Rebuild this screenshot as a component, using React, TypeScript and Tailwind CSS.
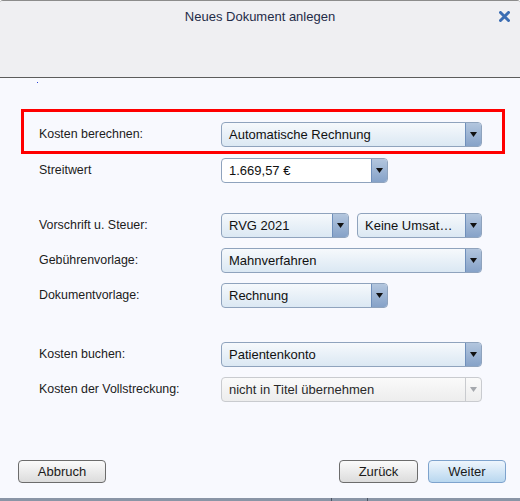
type Variant = "blue" | "white" | "disabled";

interface SelectProps {
  text: string;
  width: string;
  variant?: Variant;
}

function Select({ text, width, variant = "blue" }: SelectProps) {
  const disabled = variant === "disabled";
  return (
    <div
      className={`flex h-[25px] ${width} rounded-[4px] border ${
        disabled ? "border-[#c9cbcf]" : "border-[#8fa3bd]"
      } ${
        variant === "white"
          ? "bg-white"
          : disabled
            ? "bg-gradient-to-b from-[#fafafa] to-[#ededed]"
            : "bg-gradient-to-b from-[#f6f9fc] to-[#dbe8f3]"
      }`}
    >
      <span
        className={`flex-1 truncate pl-[7px] text-[13px] leading-[23px] ${
          disabled ? "text-[#2a2a2a]" : "text-[#111]"
        }`}
      >
        {text}
      </span>
      <span
        className={`flex w-[16px] items-center justify-center rounded-r-[3px] border-l ${
          disabled
            ? "border-[#c9cbcf] bg-transparent"
            : "border-[#6f8fbb] bg-gradient-to-b from-[#b3c6de] to-[#86a2c8]"
        }`}
      >
        <svg width="7" height="5" viewBox="0 0 7 5">
          <path d="M0 0h7L3.5 5z" fill={disabled ? "#a5a8ad" : "#111"} />
        </svg>
      </span>
    </div>
  );
}

function Row({
  label,
  children,
  className = "",
}: {
  label: string;
  children: React.ReactNode;
  className?: string;
}) {
  return (
    <div className={`flex items-center ${className}`}>
      <span className="w-[182px] text-[12.4px] text-[#1c1c1c]">{label}</span>
      {children}
    </div>
  );
}

function Button({ label, primary }: { label: string; primary?: boolean }) {
  return (
    <button
      className={`h-[23px] rounded-[4px] border text-[13px] text-[#1a1a1a] ${
        primary
          ? "w-[78px] border-[#7ea3cd] bg-gradient-to-b from-[#eef6fd] to-[#b9d7ef]"
          : "w-[79px] border-[#6c6c6c] bg-gradient-to-b from-[#fbfbfb] to-[#dcdcdc]"
      }`}
    >
      {label}
    </button>
  );
}

export default function App() {
  return (
    <div
      className="flex h-[501px] w-[520px] flex-col overflow-hidden rounded-t-[3px] border-t border-[#8c8c8c] bg-[#f8f9fe]"
      style={{ fontFamily: '"Liberation Sans", Arial, sans-serif' }}
    >
      <div className="relative h-[77px] border-b border-[#5c5c5c] bg-[#efeff2]">
        <p className="pt-[6px] text-center text-[13px] text-[#1f2c48]">
          Neues Dokument anlegen
        </p>
        <svg
          className="absolute right-[10px] top-[10px]"
          width="11"
          height="11"
          viewBox="0 0 11 11"
        >
          <path
            d="M1.5 1.5l8 8M9.5 1.5l-8 8"
            stroke="#3b6db3"
            strokeWidth="3"
            strokeLinecap="round"
          />
        </svg>
      </div>

      <div className="flex flex-1 flex-col">
        <div className="h-[31px] pl-[37px] pt-[4px]">
          <div className="h-[1px] w-[1px] bg-[#2b3fd6]" />
        </div>

        <div className="ml-[21px] h-[45px] w-[484px] border-[3px] border-[#f00] pl-[15px] pt-[10px]">
          <Row label="Kosten berechnen:">
            <Select text="Automatische Rechnung" width="w-[261px]" />
          </Row>
        </div>

        <div className="flex flex-col pl-[39px]">
          <Row label="Streitwert" className="mt-[4px]">
            <Select text="1.669,57 €" width="w-[167px]" variant="white" />
          </Row>
          <Row label="Vorschrift u. Steuer:" className="mt-[30px]">
            <div className="flex gap-[8px]">
              <Select text="RVG 2021" width="w-[128px]" />
              <Select text="Keine Umsat…" width="w-[125px]" />
            </div>
          </Row>
          <Row label="Gebührenvorlage:" className="mt-[10px]">
            <Select text="Mahnverfahren" width="w-[261px]" />
          </Row>
          <Row label="Dokumentvorlage:" className="mt-[10px]">
            <Select text="Rechnung" width="w-[167px]" />
          </Row>
          <Row label="Kosten buchen:" className="mt-[34px]">
            <Select text="Patientenkonto" width="w-[261px]" />
          </Row>
          <Row label="Kosten der Vollstreckung:" className="mt-[10px]">
            <Select
              text="nicht in Titel übernehmen"
              width="w-[261px]"
              variant="disabled"
            />
          </Row>
        </div>

        <div className="mt-[58px] flex items-center pl-[18px] pr-[14px]">
          <button className="h-[23px] w-[88px] rounded-[4px] border border-[#6c6c6c] bg-gradient-to-b from-[#fbfbfb] to-[#dcdcdc] text-[13px] text-[#1a1a1a]">
            Abbruch
          </button>
          <div className="ml-auto flex gap-[10px]">
            <Button label="Zurück" />
            <Button label="Weiter" primary />
          </div>
        </div>
      </div>

      <div className="flex h-[3px] bg-[#8a95a6]">
        <div className="ml-[331px] h-full w-[37px] border-x border-[#4d5563]" />
      </div>
    </div>
  );
}
